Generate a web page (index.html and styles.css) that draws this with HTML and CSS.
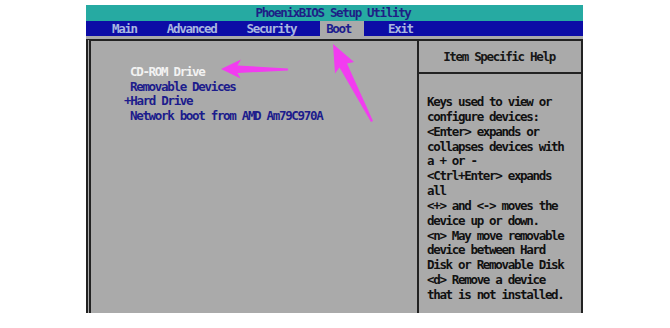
FILE: index.html
```html
<!DOCTYPE html>
<html>
<head>
<meta charset="utf-8">
<link rel="stylesheet" href="styles.css">
</head>
<body>
<div class="screen">
  <div class="title">PhoenixBIOS Setup Utility</div>
  <div class="menu">
    <span class="menu-item">Main</span>
    <span class="menu-item">Advanced</span>
    <span class="menu-item">Security</span>
    <span class="menu-item active">Boot</span>
    <span class="menu-item">Exit</span>
  </div>
  <div class="body">
    <div class="frame">
      <div class="left">
        <div class="item selected">CD-ROM Drive</div>
        <div class="item">Removable Devices</div>
        <div class="item"><span class="plus">+</span>Hard Drive</div>
        <div class="item">Network boot from AMD Am79C970A</div>
      </div>
      <div class="right">
        <div class="help-head">Item Specific Help</div>
        <div class="help-text">
          <div>Keys used to view or</div>
          <div>configure devices:</div>
          <div>&lt;Enter&gt; expands or</div>
          <div>collapses devices with</div>
          <div>a + or -</div>
          <div>&lt;Ctrl+Enter&gt; expands</div>
          <div>all</div>
          <div>&lt;+&gt; and &lt;-&gt; moves the</div>
          <div>device up or down.</div>
          <div>&lt;n&gt; May move removable</div>
          <div>device between Hard</div>
          <div>Disk or Removable Disk</div>
          <div>&lt;d&gt; Remove a device</div>
          <div>that is not installed.</div>
        </div>
      </div>
    </div>
  </div>
</div>
<svg class="arrows" width="670" height="328" viewBox="0 0 670 328">
  <polygon points="221,69 241,59.5 237.5,65.5 288,68.5 288,70.5 237.5,73 240.5,78.5" />
  <polygon points="333,44 354,62 347,63.5 373,121 371,122 339.5,67.5 335,73.5" />
</svg>
</body>
</html>
```

FILE: styles.css
```css
html, body {
  margin: 0;
  padding: 0;
  background: #ffffff;
}

body {
  position: relative;
  width: 670px;
  height: 328px;
  overflow: hidden;
  font-family: "DejaVu Sans Mono", "Liberation Mono", monospace;
  font-weight: bold;
  font-size: 12.5px;
  letter-spacing: -1.32px;
}

.screen {
  margin: 5px 0 0 86px;
  width: 497px;
  height: 308px;
  display: flex;
  flex-direction: column;
  background: #aaaaaa;
}

.title {
  height: 16px;
  line-height: 16px;
  background: #26aaa2;
  color: #1e1e86;
  text-align: center;
  padding-right: 3px;
}

.menu {
  height: 15px;
  line-height: 15px;
  background: #0c0ca6;
  display: flex;
  padding-left: 20px;
  gap: 18px;
}

.menu-item {
  padding: 0 6px;
  color: #a8b6e0;
}

.menu-item.active {
  background: #aaaaaa;
  color: #1c1c8e;
  padding-right: 13px;
}

.body {
  flex: 1;
  display: flex;
  padding-top: 3px;
}

.frame {
  flex: 1;
  display: flex;
  border-top: 2px solid #222222;
  border-left: 5px double #222222;
  border-right: 2px solid #222222;
}

.left {
  width: 328px;
  border-right: 2px solid #222222;
  padding: 24px 0 0 39px;
  box-sizing: border-box;
}

.item {
  line-height: 14.7px;
  color: #1c1c8c;
}

.item.selected {
  color: #f2f2f2;
}

.plus {
  margin-left: -6px;
}

.right {
  flex: 1;
  display: flex;
  flex-direction: column;
}

.help-head {
  height: 31px;
  border-bottom: 2px solid #222222;
  display: flex;
  align-items: center;
  justify-content: center;
  color: #161616;
  padding-right: 2px;
}

.help-text {
  padding: 21px 0 0 8px;
  line-height: 14.85px;
  color: #111111;
}

.arrows {
  position: absolute;
  left: 0;
  top: 0;
  pointer-events: none;
}

.arrows polygon {
  fill: #f23cf0;
}
```
